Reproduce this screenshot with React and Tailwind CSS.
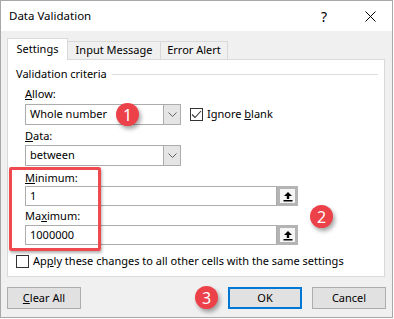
import React from "react";

const font = { fontFamily: '"Segoe UI", "Noto Sans", sans-serif' };

const Chevron = () => (
  <svg width="9" height="5" viewBox="0 0 9 5">
    <path d="M0.5 0.5 L4.5 4.5 L8.5 0.5" fill="none" stroke="#606060" strokeWidth="1" />
  </svg>
);

const Select = ({ value }) => (
  <div className="flex h-[21px] w-[156px] border border-[#acacac] bg-white">
    <div className="flex flex-1 items-center pl-[4px] text-[11px] text-black">{value}</div>
    <div className="flex w-[17px] items-center justify-center border-l border-[#acacac] bg-[#e5e5e5]">
      <Chevron />
    </div>
  </div>
);

const RefInput = ({ value }) => (
  <div className="flex h-[20px]">
    <div className="flex w-[252px] items-center border border-[#acacac] bg-white pl-[4px] text-[11px] text-black">{value}</div>
    <div className="flex w-[21px] items-center justify-center border-[3px] border-[#b4b4b4] bg-[#f5f5f5]">
      <svg width="10" height="11" viewBox="0 0 10 11">
        <path d="M5 1 L9 5 L6.2 5 L6.2 8 L3.8 8 L3.8 5 L1 5 Z" fill="#000" />
        <rect x="0.5" y="9" width="9" height="1.5" fill="#000" />
      </svg>
    </div>
  </div>
);

const Badge = ({ n, className }) => (
  <div
    className={`absolute flex h-[23px] w-[23px] items-center justify-center rounded-full bg-[#ec4148] text-[16px] text-white shadow-[2px_3px_4px_rgba(0,0,0,0.35)] ${className}`}
  >
    {n}
  </div>
);

const Button = ({ children, primary }) => (
  <div
    className={`flex h-[22px] w-[74px] items-center justify-center bg-[#e1e1e1] text-[11px] text-black ${
      primary ? "border-2 border-[#0078d7]" : "border border-[#adadad]"
    }`}
  >
    {children}
  </div>
);

export default function App() {
  return (
    <div className="relative h-[319px] w-[394px] bg-white" style={font}>
      <div className="flex h-[318px] w-[393px] flex-col border border-[#a8a8a8] bg-[#f0f0f0]">
        {/* title bar */}
        <div className="flex h-[30px] items-center bg-white pl-[8px] pr-[16px] text-[11.5px] text-black">
          <span className="flex-1">Data Validation</span>
          <span className="mr-[38px] text-[14px]">?</span>
          <svg width="11" height="11" viewBox="0 0 11 11">
            <path d="M0.5 0.5 L10.5 10.5 M10.5 0.5 L0.5 10.5" stroke="#000" strokeWidth="1" />
          </svg>
        </div>

        <div className="flex flex-col px-[6px] pt-[7px]">
          {/* tabs */}
          <div className="relative z-10 -mb-px flex items-end text-[11px] text-black">
            <div className="flex h-[22px] w-[61px] items-center justify-center border border-b-0 border-[#d9d9d9] bg-white">
              Settings
            </div>
            <div className="flex h-[19px] w-[93px] items-center justify-center border border-l-0 border-[#d9d9d9] bg-[#f0f0f0]">
              Input Message
            </div>
            <div className="flex h-[19px] w-[67px] items-center justify-center border border-l-0 border-[#d9d9d9] bg-[#f0f0f0]">
              Error Alert
            </div>
          </div>

          {/* panel */}
          <div className="flex h-[218px] w-[378px] flex-col border border-[#d9d9d9] bg-white pl-[8px] pt-[6px] text-[11px] text-black">
            <div className="flex h-[16px] items-center">
              <span>Validation criteria</span>
              <div className="ml-[5px] mr-[6px] h-px flex-1 bg-[#dcdcdc]" />
            </div>

            <div className="ml-[9px] mt-[4px] flex h-[16px] items-center">
              <span><u>A</u>llow:</span>
            </div>
            <div className="ml-[9px] mt-[2px] flex items-center">
              <Select value="Whole number" />
              <div className="ml-[9px] flex h-[13px] w-[13px] items-center justify-center border border-[#333]">
                <svg width="11" height="9" viewBox="0 0 11 9">
                  <path d="M1 4.5 L4 7.5 L10 1" fill="none" stroke="#333" strokeWidth="1.1" />
                </svg>
              </div>
              <span className="ml-[4px]">Ignore <u>b</u>lank</span>
            </div>

            <div className="ml-[9px] mt-[3px] flex h-[16px] items-center">
              <span><u>D</u>ata:</span>
            </div>
            <div className="ml-[9px] mt-[1px]">
              <Select value="between" />
            </div>

            <div className="ml-[9px] mt-[4px] flex h-[16px] items-center">
              <span><u>M</u>inimum:</span>
            </div>
            <div className="ml-[9px]">
              <RefInput value="1" />
            </div>

            <div className="ml-[9px] mt-[2px] flex h-[16px] items-center">
              <span>Ma<u>x</u>imum:</span>
            </div>
            <div className="ml-[9px] mt-[1px]">
              <RefInput value="1000000" />
            </div>

            <div className="mt-[8px] flex h-[16px] items-center">
              <div className="h-[13px] w-[13px] border border-[#333] bg-white" />
              <span className="ml-[4px]">Ap<u>p</u>ly these changes to all other cells with the same settings</span>
            </div>
          </div>

          {/* buttons */}
          <div className="mt-[10px] flex items-center">
            <Button><span><u>C</u>lear All</span></Button>
            <div className="flex-1" />
            <Button primary>OK</Button>
            <div className="w-[10px]" />
            <Button>Cancel</Button>
          </div>
        </div>
      </div>

      {/* annotations */}
      <div className="absolute left-[9px] top-[167px] h-[84px] w-[92px] rounded-[2px] border-[3px] border-[#ef4a4f] shadow-[1px_2px_3px_rgba(0,0,0,0.3)]" />
      <Badge n="1" className="left-[116px] top-[103px]" />
      <Badge n="2" className="left-[310px] top-[205px]" />
      <Badge n="3" className="left-[195px] top-[286px]" />
    </div>
  );
}
